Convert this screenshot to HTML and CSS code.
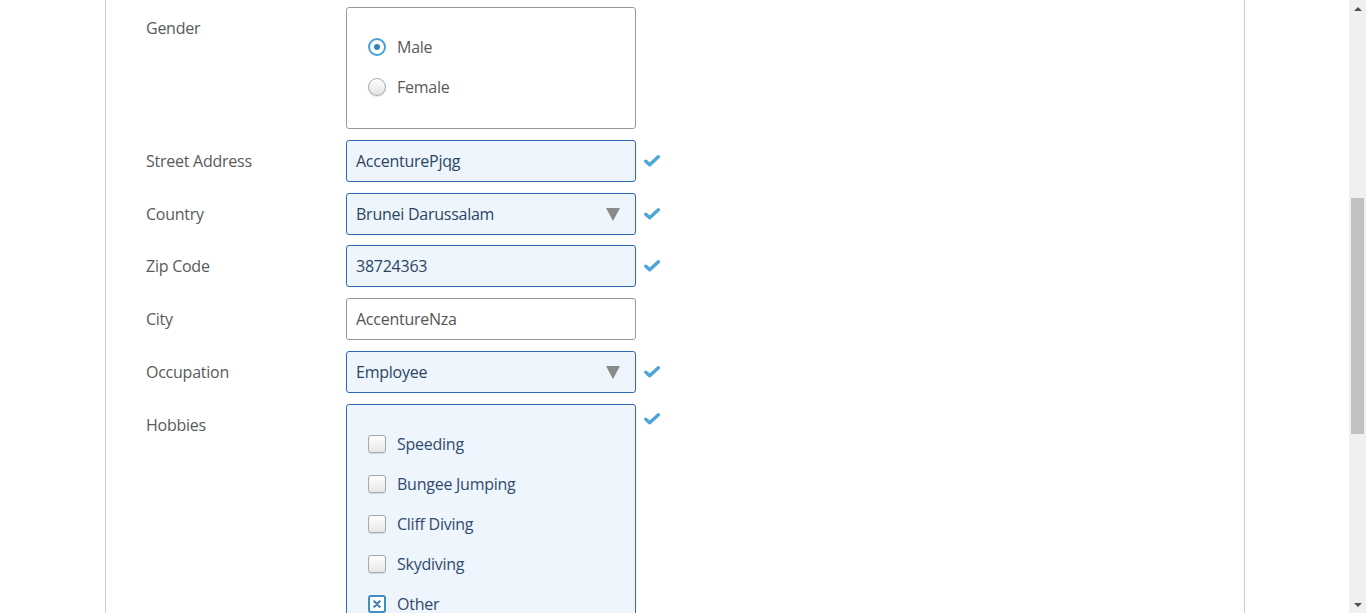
FILE: index.html
```html
<!DOCTYPE html>
<html>
<head>
<meta charset="utf-8">
<link rel="stylesheet" href="styles.css">
</head>
<body>
<div class="page">
  <div class="viewport">
    <div class="container">
      <form class="form">
        <div class="row">
          <div class="label">Gender</div>
          <div class="box">
            <div class="opt"><span class="radio on"></span><span>Male</span></div>
            <div class="opt"><span class="radio"></span><span>Female</span></div>
          </div>
          <div class="mark"></div>
        </div>
        <div class="row">
          <div class="label">Street Address</div>
          <div class="field valid">AccenturePjqg</div>
          <div class="mark"><svg class="check" viewBox="0 0 16 12"><path d="M1.8 6.2 L5.7 9.8 L14.4 1.8" /></svg></div>
        </div>
        <div class="row">
          <div class="label">Country</div>
          <div class="field valid select">Brunei Darussalam<span class="arrow"></span></div>
          <div class="mark"><svg class="check" viewBox="0 0 16 12"><path d="M1.8 6.2 L5.7 9.8 L14.4 1.8" /></svg></div>
        </div>
        <div class="row">
          <div class="label">Zip Code</div>
          <div class="field valid">38724363</div>
          <div class="mark"><svg class="check" viewBox="0 0 16 12"><path d="M1.8 6.2 L5.7 9.8 L14.4 1.8" /></svg></div>
        </div>
        <div class="row">
          <div class="label">City</div>
          <div class="field">AccentureNza</div>
          <div class="mark"></div>
        </div>
        <div class="row">
          <div class="label">Occupation</div>
          <div class="field valid select">Employee<span class="arrow"></span></div>
          <div class="mark"><svg class="check" viewBox="0 0 16 12"><path d="M1.8 6.2 L5.7 9.8 L14.4 1.8" /></svg></div>
        </div>
        <div class="row">
          <div class="label">Hobbies</div>
          <div class="box valid-box">
            <div class="opt"><span class="cb"></span><span>Speeding</span></div>
            <div class="opt"><span class="cb"></span><span>Bungee Jumping</span></div>
            <div class="opt"><span class="cb"></span><span>Cliff Diving</span></div>
            <div class="opt"><span class="cb"></span><span>Skydiving</span></div>
            <div class="opt"><span class="cb on"><svg viewBox="0 0 10 10"><path d="M2.3 2.3 L7.7 7.7 M7.7 2.3 L2.3 7.7" /></svg></span><span>Other</span></div>
          </div>
          <div class="mark mark-top"><svg class="check" viewBox="0 0 16 12"><path d="M1.8 6.2 L5.7 9.8 L14.4 1.8" /></svg></div>
        </div>
      </form>
    </div>
  </div>
  <div class="scrollbar">
    <div class="sb-btn"><span class="sb-up"></span></div>
    <div class="sb-track">
      <div class="sb-thumb"></div>
    </div>
    <div class="sb-btn"><span class="sb-down"></span></div>
  </div>
</div>
</body>
</html>
```
FILE: styles.css
```css
html, body {
  margin: 0;
  padding: 0;
  height: 100%;
  overflow: hidden;
  background: #fff;
}
body {
  font-family: "Open Sans", "Noto Sans", sans-serif;
  font-size: 16px;
  letter-spacing: -0.25px;
}
.page {
  display: flex;
  height: 613px;
}
.viewport {
  flex: 1;
  height: 613px;
  overflow: hidden;
}
.container {
  width: 1140px;
  margin: 0 0 0 105px;
  border-left: 1px solid #cccccc;
  border-right: 1px solid #cccccc;
  height: 613px;
  padding: 7px 0 0 40px;
  box-sizing: border-box;
}
.form {
  display: flex;
  flex-direction: column;
  gap: 10.8px;
}
.row {
  display: grid;
  grid-template-columns: 200px 290px 30px;
  align-items: start;
}
.label {
  line-height: 42px;
  color: #5a5a5a;
}
.field {
  height: 42px;
  box-sizing: border-box;
  border: 1px solid #999999;
  border-radius: 3px;
  padding: 0 9px;
  line-height: 40px;
  color: #555555;
  background: #ffffff;
  position: relative;
}
.field.valid {
  border-color: #2c6bb3;
  background: #eef5fc;
  color: #2b4563;
}
.arrow {
  position: absolute;
  right: 15px;
  top: 14px;
  width: 0;
  height: 0;
  border-left: 7px solid transparent;
  border-right: 7px solid transparent;
  border-top: 13px solid #8a8a8a;
}
.mark {
  padding-left: 8px;
  padding-top: 15px;
}
.mark.mark-top {
  padding-top: 9px;
}
.check {
  width: 16px;
  height: 12px;
  display: block;
}
.check path {
  fill: none;
  stroke: #4ea5d8;
  stroke-width: 3.4;
  stroke-linecap: round;
  stroke-linejoin: round;
}
.box {
  border: 1px solid #999999;
  border-radius: 3px;
  padding: 19px 20px 21px 21px;
  background: #fff;
}
.box.valid-box {
  border-color: #2c6bb3;
  background: #eef5fc;
  height: 300px;
}
.opt {
  display: flex;
  align-items: center;
  height: 40px;
  gap: 11px;
  color: #5a5a5a;
}
.valid-box .opt {
  color: #2e4a6e;
}
.radio {
  width: 18px;
  height: 18px;
  box-sizing: border-box;
  border-radius: 50%;
  border: 1px solid #a8a8a8;
  background: linear-gradient(#ffffff, #e4e4e4);
  box-shadow: 0 1px 1px rgba(0,0,0,0.12);
  position: relative;
  flex: none;
}
.radio.on {
  border: 2px solid #4aa0d5;
  background: #ffffff;
  box-shadow: none;
}
.radio.on::after {
  content: "";
  position: absolute;
  left: 4px;
  top: 4px;
  width: 6px;
  height: 6px;
  border-radius: 50%;
  background: #3382b8;
}
.cb {
  width: 18px;
  height: 18px;
  box-sizing: border-box;
  border: 1px solid #a8a8a8;
  border-radius: 3px;
  background: linear-gradient(#ffffff, #e6e6e6);
  box-shadow: 0 1px 1px rgba(0,0,0,0.12);
  display: flex;
  align-items: center;
  justify-content: center;
  flex: none;
}
.cb.on {
  border: 2px solid #3f8fc4;
  background: #ffffff;
  box-shadow: none;
}
.cb svg {
  width: 10px;
  height: 10px;
}
.cb svg path {
  stroke: #3a7fb0;
  stroke-width: 2.2;
  stroke-linecap: round;
  fill: none;
}
.scrollbar {
  width: 17px;
  height: 613px;
  background: #f0f0f0;
  display: flex;
  flex-direction: column;
}
.sb-btn {
  height: 17px;
  display: flex;
  align-items: center;
  justify-content: center;
}
.sb-up {
  width: 0;
  height: 0;
  border-left: 4px solid transparent;
  border-right: 4px solid transparent;
  border-bottom: 4px solid #505050;
}
.sb-down {
  width: 0;
  height: 0;
  border-left: 4px solid transparent;
  border-right: 4px solid transparent;
  border-top: 4px solid #505050;
}
.sb-track {
  flex: 1;
  padding-top: 181px;
}
.sb-thumb {
  margin: 0 2px;
  height: 236px;
  background: #c1c1c1;
}
```
